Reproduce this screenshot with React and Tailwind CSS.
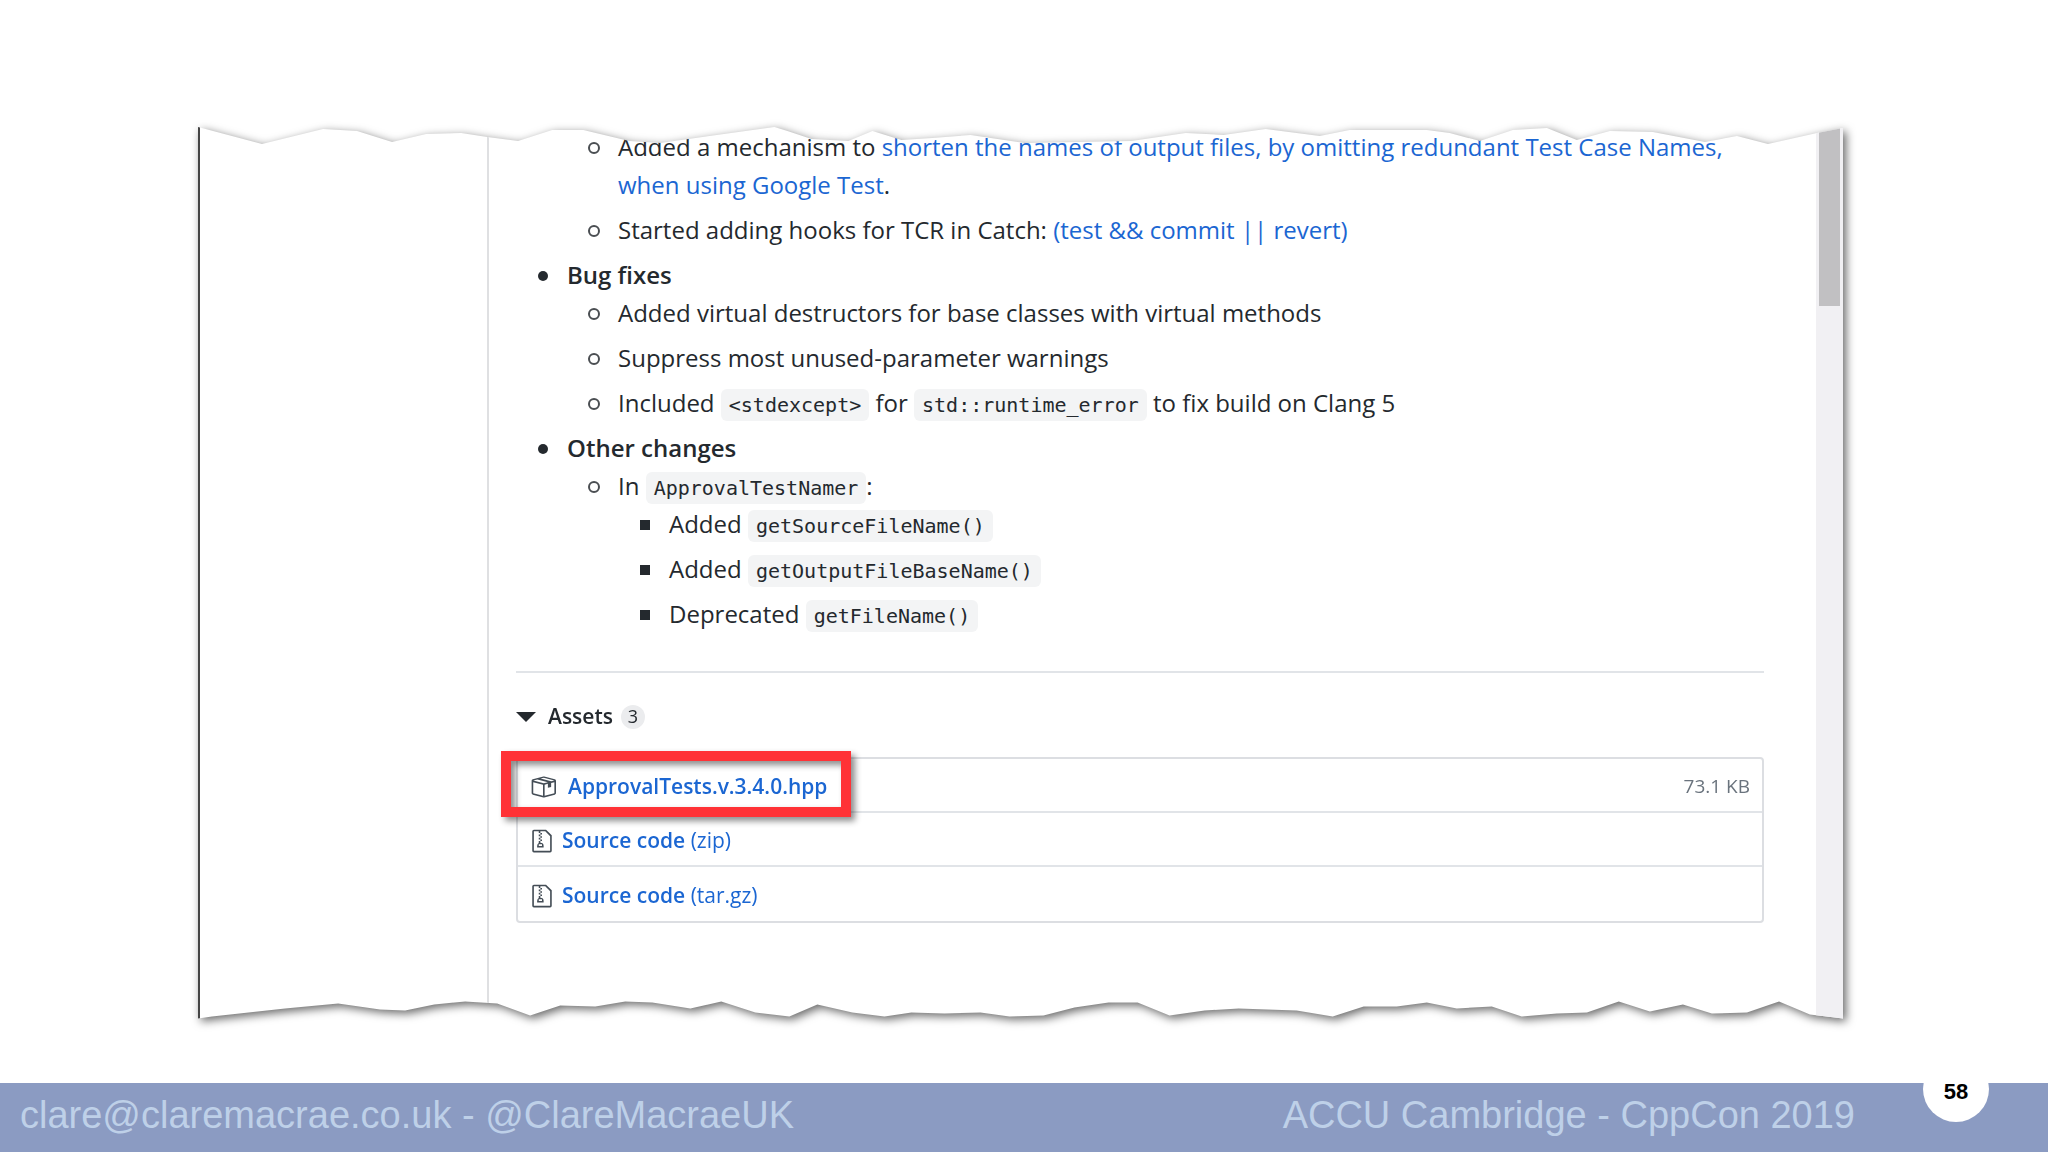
import React from 'react';
import clsx from 'clsx';

// [x, y] points along the torn edges. x runs over PAPER_WIDTH and is turned into
// a percentage, y is the distance from the top (or the bottom) of the paper.
const PAPER_WIDTH = 1644;

const topEdge = [
  [0, 0], [64, 17], [125, 2], [159, 4], [194, 15], [228, 7], [263, 6], [289, 10],
  [320, 14], [354, 3], [385, 3], [431, 14], [462, 16], [576, 0], [589, 4], [613, 12],
  [650, 14], [674, 4], [703, 13], [734, 11], [772, 8], [826, 16], [933, 14], [987, 6],
  [1025, 8], [1067, 2], [1121, 9], [1151, 3], [1228, 3], [1251, 6], [1281, 14],
  [1314, 3], [1348, 1], [1378, 13], [1411, 4], [1454, 5], [1506, 15], [1538, 9],
  [1569, 17], [1618, 6], [1644, 1],
];

const bottomEdge = [
  [1644, 0], [1611, 4], [1580, 17], [1548, 6], [1513, 5], [1484, 14], [1451, 7],
  [1420, 17], [1388, 6], [1358, 5], [1323, 2], [1293, 12], [1258, 10], [1228, 16],
  [1198, 12], [1165, 12], [1134, 2], [1098, 8], [1040, 10], [1006, 8], [971, 3],
  [939, 16], [910, 16], [876, 11], [845, 3], [811, 2], [782, 6], [746, 5], [713, 6],
  [686, 2], [654, 6], [619, 14], [591, 2], [557, 6], [523, 17], [492, 10], [454, 16],
  [427, 17], [397, 12], [362, 13], [332, 3], [299, 15], [267, 17], [236, 14],
  [207, 8], [182, 9], [140, 15], [87, 10], [14, 2], [0, 0],
];

const percent = (x) => `${((x / PAPER_WIDTH) * 100).toFixed(2)}%`;

const tornShape = `polygon(${[
  ...topEdge.map(([x, y]) => `${percent(x)} ${y}px`),
  ...bottomEdge.map(([x, y]) => `${percent(x)} calc(100% - ${y}px)`),
].join(', ')})`;

const bullets = {
  disc: 'before:size-[10px] before:-ml-[29px] before:mr-[19px] before:align-[3px] before:rounded-full before:bg-[#24292e]',
  circle: 'before:size-3 before:-ml-[30px] before:mr-[18px] before:align-[2px] before:rounded-full before:border-2 before:border-[#4a4e52]',
  square: 'before:size-[10px] before:-ml-[29px] before:mr-[19px] before:align-[3px] before:bg-[#24292e]',
};

const Item = ({ bullet, children }) => (
  <li className={clsx('before:inline-block', bullets[bullet])}>{children}</li>
);

const Code = ({ children }) => (
  <code className="rounded-md bg-[#f3f4f5] px-2 py-1 font-['DejaVu_Sans_Mono',monospace] text-[20px] leading-none">
    {children}
  </code>
);

const ReleaseLink = ({ children }) => (
  <a href="#" className="text-[#1b66d2] hover:underline">
    {children}
  </a>
);

const PackageIcon = () => (
  <svg viewBox="0 0 16 16" className="size-[26px] fill-[#444d56]" aria-hidden="true">
    <path
      fillRule="evenodd"
      d="M1 4.27v7.47c0 .45.3.84.75.97l6.5 1.73c.16.05.34.05.5 0l6.5-1.73c.45-.13.75-.52.75-.97V4.27c0-.45-.3-.84-.75-.97l-6.5-1.74a1.4 1.4 0 0 0-.5 0L1.75 3.3c-.45.13-.75.52-.75.97zm7 9.09l-6-1.59V5l6 1.61v6.75zM2 4l2.5-.67L11 5.06l-2.5.67L2 4zm13 7.77l-6 1.59V6.61l2-.55V8.5l2-.53V5.53L15 5v6.77zm-2-7.24L6.5 2.8l2-.53L15 4l-2 .53z"
    />
  </svg>
);

const ZipIcon = () => (
  <svg viewBox="0 0 12 16" className="mx-[2px] h-[26px] w-5 fill-[#444d56]" aria-hidden="true">
    <path
      fillRule="evenodd"
      d="M8.5 1H1a1 1 0 0 0-1 1v12a1 1 0 0 0 1 1h10a1 1 0 0 0 1-1V4.5L8.5 1zM11 14H1V2h3v1h1V2h3l3 3v9zM5 4V3h1v1H5zM4 4h1v1H4V4zm1 2V5h1v1H5zM4 6h1v1H4V6zm1 2V7h1v1H5zM4 9.28A2 2 0 0 0 3 11v1h4v-1a2 2 0 0 0-2-2V8H4v1.28zM6 10v1H4v-1h2z"
    />
  </svg>
);

const ReleaseNotes = () => (
  <ul className="space-y-[7px] pl-[51px] pt-px text-[24px] leading-[38px]">
    <li>
      <ul className="space-y-[7px] pl-[51px]">
        <Item bullet="circle">
          Added a mechanism to{' '}
          <ReleaseLink>
            shorten the names of output files, by omitting redundant Test Case Names,
            <br />
            when using Google Test
          </ReleaseLink>
          .
        </Item>
        <Item bullet="circle">
          Started adding hooks for TCR in Catch: <ReleaseLink>(test && commit || revert)</ReleaseLink>
        </Item>
      </ul>
    </li>
    <Item bullet="disc">
      <strong className="font-semibold">Bug fixes</strong>
      <ul className="space-y-[7px] pl-[51px]">
        <Item bullet="circle">Added virtual destructors for base classes with virtual methods</Item>
        <Item bullet="circle">Suppress most unused-parameter warnings</Item>
        <Item bullet="circle">
          Included <Code>&lt;stdexcept&gt;</Code> for <Code>std::runtime_error</Code> to fix build on Clang 5
        </Item>
      </ul>
    </Item>
    <Item bullet="disc">
      <strong className="font-semibold">Other changes</strong>
      <ul className="pl-[51px]">
        <Item bullet="circle">
          In <Code>ApprovalTestNamer</Code>:
          <ul className="space-y-[7px] pl-[51px]">
            <Item bullet="square">Added <Code>getSourceFileName()</Code></Item>
            <Item bullet="square">Added <Code>getOutputFileBaseName()</Code></Item>
            <Item bullet="square">Deprecated <Code>getFileName()</Code></Item>
          </ul>
        </Item>
      </ul>
    </Item>
  </ul>
);

const Assets = () => (
  <details open className="text-[21px]">
    <summary className="flex cursor-pointer list-none items-center">
      <svg viewBox="0 0 20 10" className="h-[10px] w-5 fill-[#24292e]" aria-hidden="true">
        <path d="M0 0h20L10 10z" />
      </svg>
      <span className="ml-3 font-semibold">Assets</span>
      <span className="ml-2 flex size-6 items-center justify-center rounded-full bg-[#ebecee] text-[18px]">3</span>
    </summary>

    <ul className="mt-6 divide-y-2 divide-[#e1e4e8] rounded border-2 border-[#dcdee2]">
      <li className="relative flex h-[54px] items-center justify-between px-3 pt-1">
        <a href="#" className="flex items-center gap-3 font-semibold text-[#1b66d2]">
          <PackageIcon />
          ApprovalTests.v.3.4.0.hpp
        </a>
        <small className="text-[19px] text-[#6a737d]">73.1 KB</small>
        <span className="pointer-events-none absolute -left-[17px] -top-2 h-[66px] w-[350px] border-[10px] border-[#ff3236] drop-shadow-[4px_4px_3px_rgba(0,0,0,0.45)]" />
      </li>
      {['zip', 'tar.gz'].map((type) => (
        <li key={type} className="flex h-[54px] items-center px-3 pt-1">
          <a href="#" className="flex items-center text-[#1b66d2]">
            <ZipIcon />
            <span className="ml-2">
              <strong className="font-semibold">Source code</strong> ({type})
            </span>
          </a>
        </li>
      ))}
    </ul>
  </details>
);

const Footer = () => (
  <footer className="flex h-[69px] items-start bg-[#8b9bc2] pl-5 pr-[59px] font-['Liberation_Sans',Arial,sans-serif]">
    <p className="pt-3 text-[38px] leading-[40px] text-[#bed0e8]">clare@claremacrae.co.uk - @ClareMacraeUK</p>
    <p className="ml-auto pt-3 text-[38px] leading-[40px] text-[#bed0e8]">ACCU Cambridge - CppCon 2019</p>
    <span className="-mt-[27px] ml-[68px] flex size-[66px] items-center justify-center rounded-full bg-white pt-1 text-[22px] font-bold text-black">
      58
    </span>
  </footer>
);

const App = () => {
  return (
    <div className="flex min-h-screen flex-col bg-white font-['Open_Sans','Noto_Sans',sans-serif] text-[#24292e]">
      <main className="flex-1 pb-16 pl-[198px] pr-[205px] pt-[127px]">
        <div className="drop-shadow-[3px_3px_5px_rgba(0,0,0,0.6)]">
          <div className="flex border-l-2 border-[#444] bg-white" style={{ clipPath: tornShape }}>
            <div className="w-[287px] shrink-0" />
            <div className="flex-1 border-l-2 border-[#dfe0e2] pb-24 pl-[27px] pr-[52px]">
              <ReleaseNotes />
              <hr className="mb-7 mt-[38px] border-t-2 border-[#e1e4e8]" />
              <Assets />
            </div>
            <div className="w-[27px] bg-[#f1f0f3] px-[3px]">
              <div className="h-[179px] bg-[#c1c0c2]" />
            </div>
          </div>
        </div>
      </main>
      <Footer />
    </div>
  );
};

export default App;
